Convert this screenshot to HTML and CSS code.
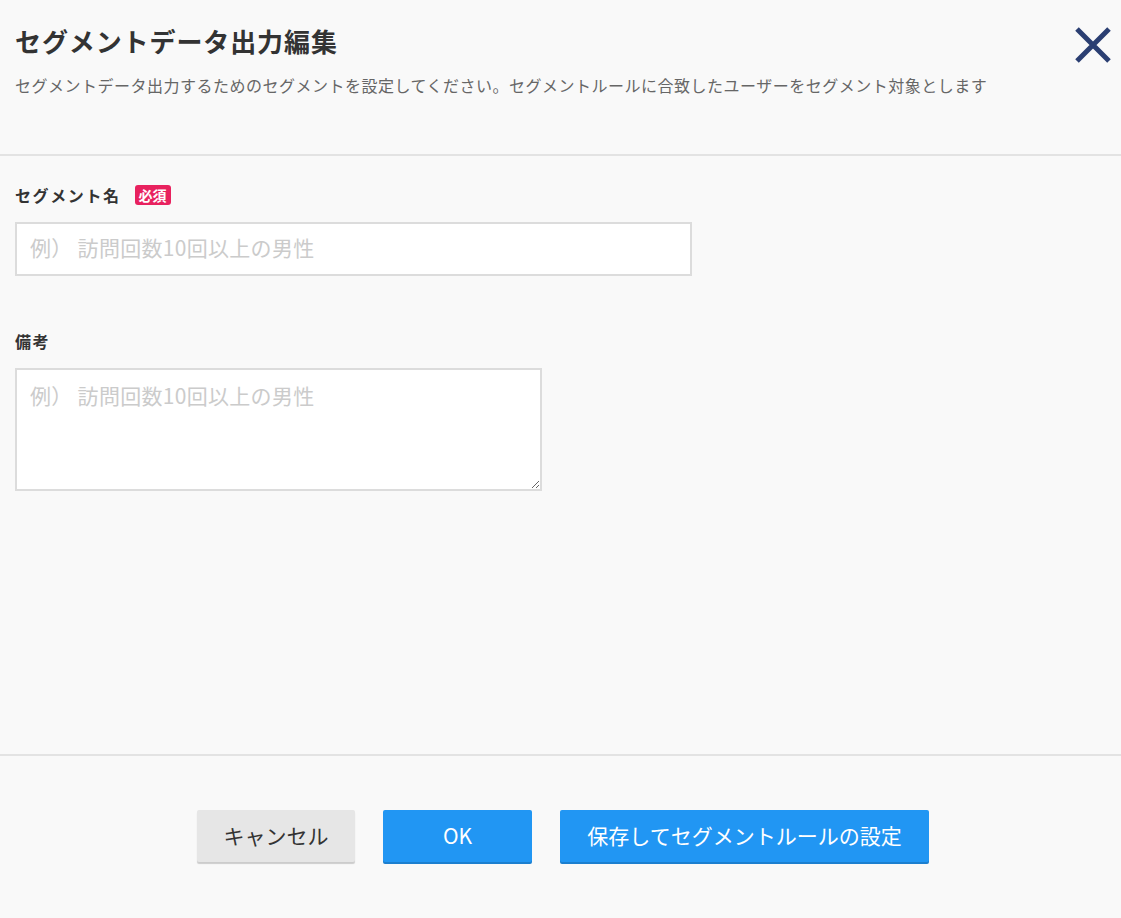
FILE: index.html
```html
<!DOCTYPE html>
<html lang="ja">
<head>
<meta charset="utf-8">
<link rel="stylesheet" href="styles.css">
</head>
<body>
<div class="modal">
  <header class="header">
    <div class="header-text">
      <h1 class="title">セグメントデータ出力編集</h1>
      <p class="desc">セグメントデータ出力するためのセグメントを設定してください。セグメントルールに合致したユーザーをセグメント対象とします</p>
    </div>
    <button class="close" aria-label="閉じる">
      <svg width="36" height="36" viewBox="0 0 36 36"><path d="M2 2L34 34M34 2L2 34" stroke="#2b3f72" stroke-width="5" fill="none"/></svg>
    </button>
  </header>
  <main class="content">
    <div class="field">
      <label class="label">セグメント名 <span class="badge">必須</span></label>
      <input class="input" type="text" placeholder="例） 訪問回数10回以上の男性">
    </div>
    <div class="field field-note">
      <label class="label">備考</label>
      <textarea class="textarea" placeholder="例） 訪問回数10回以上の男性"></textarea>
    </div>
  </main>
  <footer class="footer">
    <button class="btn btn-cancel">キャンセル</button>
    <button class="btn btn-primary btn-ok">OK</button>
    <button class="btn btn-primary btn-rule">保存してセグメントルールの設定</button>
  </footer>
</div>
</body>
</html>
```
FILE: styles.css
```css
html, body {
  margin: 0;
  padding: 0;
  background: #f9f9f9;
}
body {
  font-family: "Noto Sans CJK JP", "Noto Sans", sans-serif;
  color: #333;
}
.modal {
  width: 1121px;
  height: 918px;
  display: flex;
  flex-direction: column;
}
.header {
  height: 156px;
  flex-shrink: 0;
  box-sizing: border-box;
  border-bottom: 2px solid #e3e3e3;
  display: flex;
  justify-content: space-between;
  padding: 22px 10px 0 15px;
}
.title {
  margin: 0;
  font-size: 26px;
  line-height: 38px;
  font-weight: 700;
  letter-spacing: 0.9px;
  color: #333;
}
.desc {
  margin: 13px 0 0;
  font-size: 16px;
  line-height: 24px;
  letter-spacing: 0.5px;
  color: #666;
}
.close {
  border: 0;
  background: none;
  padding: 0;
  margin-top: 5px;
  width: 36px;
  height: 36px;
  cursor: pointer;
}
.content {
  height: 600px;
  flex-shrink: 0;
  box-sizing: border-box;
  border-bottom: 2px solid #e3e3e3;
  padding: 27px 15px 0;
}
.field {
  display: flex;
  flex-direction: column;
  align-items: flex-start;
}
.field-note {
  margin-top: 53px;
}
.label {
  font-size: 16px;
  font-weight: 700;
  line-height: 24px;
  letter-spacing: 1.6px;
  color: #333;
  display: flex;
  align-items: center;
}
.badge {
  display: inline-block;
  margin-left: 14px;
  background: #e8225f;
  color: #fff;
  font-size: 14px;
  line-height: 20px;
  padding: 0 4px;
  border-radius: 3px;
  letter-spacing: 0;
}
.input, .textarea {
  font-family: inherit;
  font-size: 21px;
  letter-spacing: 0.3px;
  color: #333;
  background: #fff;
  border: 2px solid #dcdcdc;
  box-sizing: border-box;
  outline: none;
}
.input {
  margin-top: 15px;
  width: 677px;
  height: 54px;
  padding: 0 13px 4px;
}
.textarea {
  margin-top: 15px;
  width: 527px;
  height: 123px;
  padding: 10px 13px;
  resize: vertical;
}
.input::placeholder, .textarea::placeholder {
  color: #cbcbcb;
}
.footer {
  display: flex;
  justify-content: center;
  gap: 28px;
  padding-top: 54px;
  padding-left: 5px;
}
.btn {
  font-family: inherit;
  font-size: 21px;
  height: 52px;
  border: 0;
  border-radius: 2px;
  cursor: pointer;
  padding: 0 0 3px;
}
.btn-cancel {
  width: 158px;
  background: #e6e6e6;
  color: #333;
  box-shadow: 0 2px 1px rgba(0,0,0,0.18);
}
.btn-primary {
  background: #2196f3;
  color: #fff;
  box-shadow: 0 2px 0 #1c7fcf;
}
.btn-ok {
  width: 149px;
}
.btn-rule {
  width: 369px;
}
```
